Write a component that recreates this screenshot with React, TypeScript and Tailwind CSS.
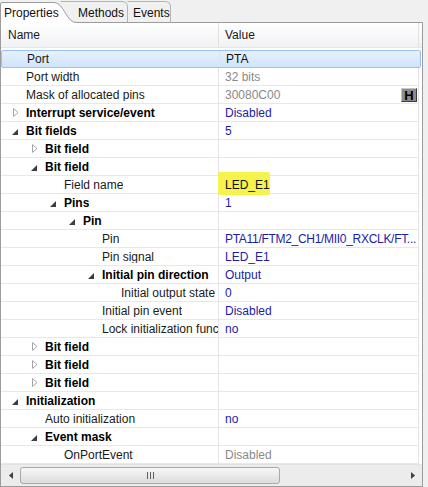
import React from 'react'

type Kind = 'leaf' | 'open' | 'closed'
type Tone = 'black' | 'gray' | 'blue'

interface PropRow {
  name: string
  value?: string
  level: number
  kind: Kind
  tone?: Tone
  selected?: boolean
  highlight?: boolean
  button?: boolean
  tight?: boolean
}

const rows: PropRow[] = [
  { name: 'Port', value: 'PTA', level: 0, kind: 'leaf', tone: 'black', selected: true },
  { name: 'Port width', value: '32 bits', level: 0, kind: 'leaf', tone: 'gray' },
  { name: 'Mask of allocated pins', value: '30080C00', level: 0, kind: 'leaf', tone: 'gray', button: true },
  { name: 'Interrupt service/event', value: 'Disabled', level: 0, kind: 'closed', tone: 'blue' },
  { name: 'Bit fields', value: '5', level: 0, kind: 'open', tone: 'blue' },
  { name: 'Bit field', level: 1, kind: 'closed' },
  { name: 'Bit field', level: 1, kind: 'open' },
  { name: 'Field name', value: 'LED_E1', level: 2, kind: 'leaf', tone: 'black', highlight: true },
  { name: 'Pins', value: '1', level: 2, kind: 'open', tone: 'blue' },
  { name: 'Pin', level: 3, kind: 'open' },
  { name: 'Pin', value: 'PTA11/FTM2_CH1/MII0_RXCLK/FT...', level: 4, kind: 'leaf', tone: 'blue', tight: true },
  { name: 'Pin signal', value: 'LED_E1', level: 4, kind: 'leaf', tone: 'blue' },
  { name: 'Initial pin direction', value: 'Output', level: 4, kind: 'open', tone: 'blue' },
  { name: 'Initial output state', value: '0', level: 5, kind: 'leaf', tone: 'blue' },
  { name: 'Initial pin event', value: 'Disabled', level: 4, kind: 'leaf', tone: 'blue' },
  { name: 'Lock initialization function', value: 'no', level: 4, kind: 'leaf', tone: 'blue' },
  { name: 'Bit field', level: 1, kind: 'closed' },
  { name: 'Bit field', level: 1, kind: 'closed' },
  { name: 'Bit field', level: 1, kind: 'closed' },
  { name: 'Initialization', level: 0, kind: 'open' },
  { name: 'Auto initialization', value: 'no', level: 1, kind: 'leaf', tone: 'blue' },
  { name: 'Event mask', level: 1, kind: 'open' },
  { name: 'OnPortEvent', value: 'Disabled', level: 2, kind: 'leaf', tone: 'gray' },
]

const indent: Record<number, string> = {
  0: 'pl-[11px]',
  1: 'pl-[30px]',
  2: 'pl-[49px]',
  3: 'pl-[68px]',
  4: 'pl-[87px]',
  5: 'pl-[106px]',
}

const toneClass: Record<Tone, string> = {
  black: 'text-[#111111]',
  gray: 'text-[#8a8a8a]',
  blue: 'text-[#1c1ca6]',
}

function Arrow({ kind }: { kind: Kind }) {
  if (kind === 'closed') {
    return (
      <svg width="6" height="9" viewBox="0 0 6 9" className="ml-[1px]">
        <polygon points="0.5,0.5 5,4.5 0.5,8.5" fill="white" stroke="#a6a6a6" strokeWidth="1" />
      </svg>
    )
  }
  if (kind === 'open') {
    return (
      <svg width="6" height="6" viewBox="0 0 6 6" className="mt-[2px]">
        <polygon points="6,0 6,6 0,6" fill="#3c3c3c" />
      </svg>
    )
  }
  return null
}

function TabBar() {
  return (
    <div className="relative h-[23px] flex items-start text-[#111111]">
      {/* tab outlines */}
      <svg className="absolute inset-0" width="428" height="23" viewBox="0 0 428 23">
        <path d="M60.5,1.5 L122,1.5 Q127.5,1.5 127.5,7 L127.5,22" fill="none" stroke="#b4b4b4" />
        <path d="M127.5,1.5 L165,1.5 Q170.5,1.5 170.5,7 L170.5,22" fill="none" stroke="#b4b4b4" />
        <path d="M0.5,23 L0.5,4 Q0.5,2.5 2,2.5 L54,2.5 C64,2.5 66,22.5 76,22.5 L76,23 Z" fill="white" />
        <path
          d="M0.5,23 L0.5,4 Q0.5,2.5 2,2.5 L54,2.5 C64,2.5 66,22.5 76,22.5 L422.5,22.5 L422.5,23"
          fill="none"
          stroke="#9c9c9c"
        />
      </svg>
      <span className="relative w-[74px] pl-[4px] pt-[7px]">Properties</span>
      <span className="relative w-[55px] pl-[4px] pt-[7px]">Methods</span>
      <span className="relative w-[50px] pl-[4px] pt-[7px]">Events</span>
    </div>
  )
}

function Row({ row }: { row: PropRow }) {
  const bold = row.kind !== 'leaf'
  return (
    <div
      className={`flex h-[18px] ${
        row.selected
          ? 'bg-gradient-to-b from-[#e7f1fd] to-[#cfe4fb] border border-[#9cc1ec] rounded-[2px] w-[420px]'
          : ''
      }`}
    >
      <div
        className={`flex items-center w-[218px] shrink-0 overflow-hidden whitespace-nowrap ${
          row.selected ? '' : 'border-b border-[#e8e8e8]'
        } border-r border-r-[#e3e3e3] ${indent[row.level]}`}
      >
        <span className="w-[14px] shrink-0 flex items-center">
          <Arrow kind={row.kind} />
        </span>
        <span
          className={`min-w-0 overflow-hidden ${bold ? 'font-bold text-[#000000]' : 'text-[#1a1a1a]'}`}
        >
          {row.name}
        </span>
      </div>
      <div
        className={`relative flex items-center w-[200px] shrink-0 pl-[6px] whitespace-nowrap ${
          row.selected ? '' : 'border-b border-[#e8e8e8]'
        } border-r border-r-[#e3e3e3]`}
      >
        {row.highlight && (
          <span className="absolute left-[-1px] top-[-4px] w-[52px] h-[23px] bg-[#f6f34c] rounded-[2px]" />
        )}
        <span
          className={`relative ${row.tone ? toneClass[row.tone] : ''} ${row.tight ? 'tracking-[-0.3px]' : ''}`}
        >
          {row.value}
        </span>
        {row.button && (
          <span className="absolute right-[1px] top-[2px] w-[16px] h-[14px] flex items-center justify-center bg-[#8c8c8c] border border-t-[#c8c8c8] border-l-[#c8c8c8] border-r-[#3a3a3a] border-b-[#3a3a3a] font-bold text-[13px] leading-none text-[#000000]">
            H
          </span>
        )}
      </div>
    </div>
  )
}

function ScrollBar() {
  return (
    <div className="flex items-center h-[22px] bg-[#ececec] border-t border-[#e2e2e2]">
      <span className="w-[19px] flex items-center justify-center">
        <svg width="4" height="7" viewBox="0 0 4 7">
          <polygon points="4,0 4,7 0,3.5" fill="#404040" />
        </svg>
      </span>
      <div className="w-[260px] h-[17px] rounded-[3px] border border-[#a9a9a9] bg-gradient-to-b from-[#f7f7f7] to-[#dcdcdc] flex items-center justify-center gap-[2px]">
        <span className="w-[1px] h-[7px] bg-[#606060]" />
        <span className="w-[1px] h-[7px] bg-[#606060]" />
        <span className="w-[1px] h-[7px] bg-[#606060]" />
      </div>
      <div className="flex-1" />
      <span className="w-[19px] flex items-center justify-center">
        <svg width="4" height="7" viewBox="0 0 4 7">
          <polygon points="0,0 0,7 4,3.5" fill="#404040" />
        </svg>
      </span>
    </div>
  )
}

export default function App() {
  return (
    <div
      className="w-[428px] h-[487px] bg-[#f0f0f0] overflow-hidden text-[12px] leading-none"
      style={{ fontFamily: '"Liberation Sans", Arial, sans-serif' }}
    >
      <TabBar />
      <div className="w-[423px] h-[464px] bg-white border-l border-r border-b border-[#9c9c9c] flex flex-col">
        {/* Header */}
        <div className="flex h-[25px] bg-gradient-to-b from-[#ffffff] to-[#f1f2f4] border-b border-[#e6e6e6] text-[#1a1a1a]">
          <div className="w-[218px] flex items-center pl-[7px] border-r border-[#e2e2e2]">Name</div>
          <div className="w-[200px] flex items-center pl-[6px] border-r border-[#e2e2e2]">Value</div>
        </div>
        <div className="h-[2px]" />
        {/* Rows */}
        <div className="flex flex-col">
          {rows.map((row, i) => (
            <Row key={i} row={row} />
          ))}
        </div>
        <div className="flex-1" />
        <ScrollBar />
      </div>
    </div>
  )
}
